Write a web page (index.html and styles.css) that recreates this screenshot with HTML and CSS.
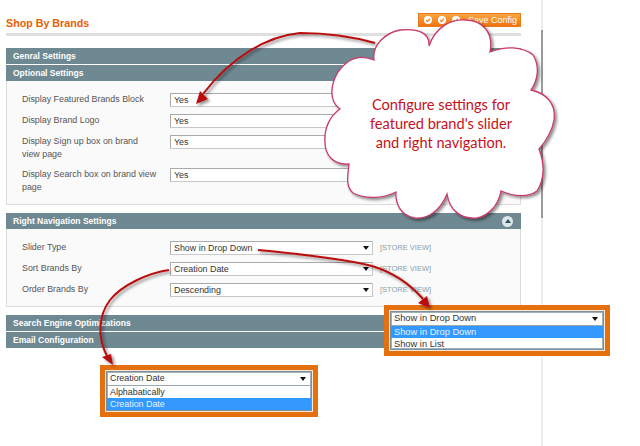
FILE: index.html
```html
<!DOCTYPE html>
<html lang="en">
<head>
<meta charset="utf-8">
<title>Shop By Brands</title>
<link rel="stylesheet" href="styles.css">
</head>
<body>
<div class="page">
  <main class="main">
    <header class="head">
      <h1 class="title">Shop By Brands</h1>
      <div class="save">
        <span class="tick"><svg viewBox="0 0 8 8"><path d="M2 4.2 3.5 5.7 6 2.6"/></svg></span>
        <span class="tick"><svg viewBox="0 0 8 8"><path d="M2 4.2 3.5 5.7 6 2.6"/></svg></span>
        <span class="tick"><svg viewBox="0 0 8 8"><path d="M2 4.2 3.5 5.7 6 2.6"/></svg></span>
        <span class="save-label">Save Config</span>
      </div>
    </header>

    <div class="bar">Genral Settings</div>
    <div class="bar">Optional Settings</div>
    <section class="panel">
      <div class="row"><div class="label">Display Featured Brands Block</div><div class="select">Yes<i class="caret"></i></div></div>
      <div class="row"><div class="label">Display Brand Logo</div><div class="select">Yes<i class="caret"></i></div></div>
      <div class="row"><div class="label">Display Sign up box on brand view page</div><div class="select">Yes<i class="caret"></i></div></div>
      <div class="row"><div class="label">Display Search box on brand view page</div><div class="select">Yes<i class="caret"></i></div></div>
    </section>

    <div class="bar bar-toggle">Right Navigation Settings<span class="toggle"><i></i></span></div>
    <section class="panel panel-short">
      <div class="row"><div class="label">Slider Type</div><div class="select">Show in Drop Down<i class="caret"></i></div><div class="scope">[STORE VIEW]</div></div>
      <div class="row"><div class="label">Sort Brands By</div><div class="select">Creation Date<i class="caret"></i></div><div class="scope">[STORE VIEW]</div></div>
      <div class="row"><div class="label">Order Brands By</div><div class="select">Descending<i class="caret"></i></div><div class="scope">[STORE VIEW]</div></div>
    </section>

    <div class="bar">Search Engine Optimizations</div>
    <div class="bar">Email Configuration</div>
  </main>
  <div class="rail"><span class="rail-top"></span><span class="rail-thumb"></span><span class="rail-rest"></span></div>
</div>

<div class="callout callout-slider">
  <div class="dropdown">
    <div class="dd-value">Show in Drop Down<i class="caret"></i></div>
    <div class="dd-option dd-active">Show in Drop Down</div>
    <div class="dd-option">Show in List</div>
  </div>
</div>

<div class="callout callout-sort">
  <div class="dropdown">
    <div class="dd-value">Creation Date<i class="caret"></i></div>
    <div class="dd-option">Alphabatically</div>
    <div class="dd-option dd-active">Creation Date</div>
  </div>
</div>

<svg class="overlay" viewBox="0 0 640 446" aria-hidden="true">
  <defs>
    <filter id="shadow" x="-20%" y="-20%" width="140%" height="140%">
      <feDropShadow dx="2" dy="2" stdDeviation="1.5" flood-color="#000" flood-opacity="0.45"/>
    </filter>
  </defs>
  <g filter="url(#shadow)">
    <path class="arrow" d="M375 43C350 36 325 33 300 33 268 36 232 56 203 94"/>
    <path class="tip" d="M196 104 200 91 208 99Z"/>
    <path class="arrow" d="M258 250C300 254 345 259 372 266 395 273 410 284 423 299"/>
    <path class="tip" d="M430 308 418 303 427 296Z"/>
    <path class="arrow" d="M169 270C148 273 122 285 110 300 98 316 97 338 108 358"/>
    <path class="tip" d="M113 365 102 357 111 354Z"/>
  </g>
  <path class="cloud" filter="url(#shadow)" d="M374 60C372 45 385 33 400 30 418 28 430 33 429 46 435 28 450 19 465 20 482 20 494 32 490 52 505 46 522 46 533 55 540 66 538 80 531 90 548 94 556 105 554 120 552 132 546 141 539 149 545 165 544 180 537 191 527 198 513 196 501 191 498 207 487 216 477 218 462 219 450 212 447 194 440 211 428 219 415 218 402 216 395 205 396 192 382 199 365 199 353 193 345 186 348 175 349 164 333 165 325 155 325 142 324 128 330 116 340 109 328 100 331 84 338 72 348 58 360 54 374 60Z"/>
</svg>

<p class="cloud-text">Configure settings for<br>featured brand's slider<br>and right navigation.</p>
</body>
</html>
```
FILE: styles.css
```css
* { box-sizing: border-box; }
html, body { margin: 0; padding: 0; }
body {
  position: relative;
  width: 640px;
  height: 446px;
  overflow: hidden;
  background: #fff;
  font-family: "Liberation Sans", Arial, sans-serif;
  font-size: 8.9px;
  color: #444;
}
.page { display: flex; height: 446px; padding-left: 6px; }
.main { width: 515px; flex: none; }
.rail { display: flex; flex-direction: column; width: 2px; margin-left: 20px; flex: none; }
.rail-top { height: 30px; background: #eeeeee; }
.rail-thumb { height: 188px; background: #9a9a9a; }
.rail-rest { flex: 1; background: #eeeeee; }

.head {
  display: flex;
  justify-content: space-between;
  height: 36px;
  margin-bottom: 12px;
  padding-top: 13px;
  border-bottom: 3px solid #e0e0e0;
}
.title { margin: 3px 0 0; font-size: 10.7px; line-height: 14px; font-weight: bold; color: #eb5e00; }
.save {
  display: flex;
  align-items: center;
  gap: 6px;
  width: 103px;
  height: 14px;
  padding-left: 5px;
  background: linear-gradient(#fba53f, #ee7410);
  border: 1px solid #e87a1c;
}
.tick { display: block; width: 8px; height: 8px; border-radius: 50%; background: #fff; }
.tick svg { display: block; width: 8px; height: 8px; }
.tick path { fill: none; stroke: #e87a1c; stroke-width: 1.2; }
.save-label { margin-left: 2px; color: #fff; font-size: 9px; line-height: 12px; white-space: nowrap; }

.bar {
  height: 16px;
  margin-bottom: 1px;
  padding-left: 7px;
  background: #6f8992;
  color: #fff;
  font-size: 8.5px;
  line-height: 17px;
  font-weight: bold;
}
.bar-toggle { display: flex; justify-content: space-between; align-items: center; padding-right: 8px; margin-bottom: 0; }
.toggle { display: flex; align-items: center; justify-content: center; width: 11px; height: 11px; border-radius: 50%; background: #dde6e8; }
.toggle i { width: 0; height: 0; border: 3px solid transparent; border-top: 0; border-bottom: 4px solid #2d5664; }

.panel {
  display: flex;
  flex-direction: column;
  gap: 7px;
  margin: -1px 0 8px;
  padding: 12px 0 10px 15px;
  background: #fafafa;
  border: 1px solid #dcdcdc;
  border-top: 0;
}
.bar-toggle + .panel { margin-top: 0; }
.panel-short { padding-bottom: 9px; }
.row { display: grid; grid-template-columns: 148px 203px auto; align-items: start; }
.label { width: 136px; line-height: 13px; color: #555; }
.select {
  display: flex;
  align-items: center;
  justify-content: space-between;
  height: 14px;
  padding: 0 3px;
  background: #fff;
  border: 1px solid #c8c8c8;
  border-top-color: #aaa;
  border-left-color: #aaa;
  border-radius: 1px;
  line-height: 12px;
  color: #333;
}
.caret { width: 0; height: 0; border: 3px solid transparent; border-bottom: 0; border-top: 4px solid #111; flex: none; }
.scope { margin-left: 7px; font-size: 7.5px; line-height: 13px; color: #8c9ea6; white-space: nowrap; }

.callout {
  position: absolute;
  padding: 1px;
  background: #fbe9d8;
  outline: 5px solid #e5700f;
}
.callout-slider { left: 389px; top: 310px; width: 216px; height: 41px; font-size: 9.3px; }
.callout-sort { left: 105px; top: 370px; width: 208px; height: 42px; }
.dropdown { height: 100%; padding-bottom: 1px; background: #fff; border: 1px solid #7f8f9a; box-shadow: inset 0 0 0 1px #9fb0ba; color: #333; }
.dd-value { display: flex; justify-content: space-between; align-items: center; height: 14px; padding: 0 5px 0 3px; border-bottom: 1px solid #9aa8b0; line-height: 13px; }
.dd-option { height: 12px; padding-left: 3px; line-height: 12px; }
.dd-active { background: #3399ff; color: #e6f2ff; }

.overlay { position: absolute; left: 0; top: 0; width: 640px; height: 446px; pointer-events: none; }
.arrow { fill: none; stroke: #b90f0f; stroke-width: 2; }
.tip { fill: #b90f0f; }
.cloud { fill: #fff; stroke: #c8396a; stroke-width: 1.3; }
.cloud-text {
  position: absolute;
  left: 341px;
  top: 95px;
  width: 200px;
  margin: 0;
  text-align: center;
  font-family: Lato, "DejaVu Sans", sans-serif;
  font-size: 14.6px;
  line-height: 19px;
  color: #c8101a;
}
```
